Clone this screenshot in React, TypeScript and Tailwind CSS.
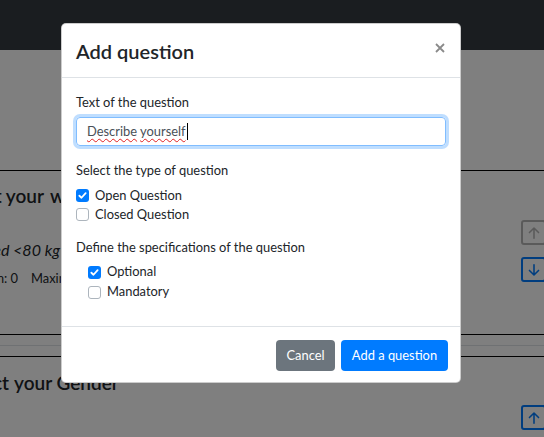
import React from "react";

function Check({ checked }: { checked: boolean }) {
  return checked ? (
    <span className="flex h-[13px] w-[13px] shrink-0 items-center justify-center rounded-[3px] bg-[#007bff]">
      <svg width="9" height="9" viewBox="0 0 8 8">
        <path d="M1.2 4.2 L3.1 6 L6.8 1.9" fill="none" stroke="white" strokeWidth="1.6" strokeLinecap="round" strokeLinejoin="round" />
      </svg>
    </span>
  ) : (
    <span className="h-[13px] w-[13px] shrink-0 rounded-[3px] border border-[#adb5bd] bg-white" />
  );
}

function ArrowBtn({ dir, tone }: { dir: "up" | "down"; tone: "gray" | "blue" }) {
  const c = tone === "gray" ? "#b5b5b5" : "#007bff";
  return (
    <span
      className={
        "flex h-[25px] w-[25px] items-center justify-center rounded-[3px] border-2 " +
        (tone === "gray" ? "border-[#b5b5b5]" : "border-[#007bff]")
      }
    >
      <svg width="14" height="14" viewBox="0 0 16 16">
        {dir === "up" ? (
          <path d="M8 14 V2.5 M2.8 7.5 L8 2.3 L13.2 7.5" fill="none" stroke={c} strokeWidth="1.8" strokeLinecap="round" strokeLinejoin="round" />
        ) : (
          <path d="M8 2 V13.5 M2.8 8.5 L8 13.7 L13.2 8.5" fill="none" stroke={c} strokeWidth="1.8" strokeLinecap="round" strokeLinejoin="round" />
        )}
      </svg>
    </span>
  );
}

export default function App() {
  return (
    <div className="relative h-[437px] w-[544px] overflow-hidden bg-white font-['Lato',sans-serif] text-[#212529]">
      {/* page underneath */}
      <div className="h-[50px] bg-[#343a40]" />
      <div className="h-[121px] border-b border-black" />
      <section className="flex h-[163px] justify-between">
        <div className="pt-[13px]">
          <h5 className="flex whitespace-nowrap text-[19px] font-semibold leading-[24px]">
            <span className="flex w-[44px] justify-end">Select your</span>
            <span className="ml-[6px]">weight</span>
          </h5>
          <p className="mt-[30px] flex whitespace-nowrap text-[16px] italic leading-[24px]">
            <span className="flex w-[60px] justify-end">Underweighted &lt;80 kg</span>
          </p>
          <p className="mt-[6px] flex whitespace-nowrap text-[12.9px] leading-[20px]">
            <span className="flex w-[18px] justify-end">Minimum: 0</span>
            <span className="ml-[13px]">Maximum: 1</span>
          </p>
        </div>
        <div className="-mr-[2px] flex flex-col gap-[12px] pt-[49px]">
          <ArrowBtn dir="up" tone="gray" />
          <ArrowBtn dir="down" tone="blue" />
        </div>
      </section>
      <div className="h-[12px] border-y border-b-[#dee2e6] border-t-black" />
      <div className="h-[11px] border-b border-black" />
      <section className="flex justify-between">
        <div className="pt-[14px]">
          <h5 className="flex whitespace-nowrap text-[19px] font-semibold leading-[24px]">
            <span className="flex w-[9px] justify-end">Select</span>
            <span className="ml-[5px]">your Gender</span>
          </h5>
        </div>
        <div className="-mr-[2px] pt-[48px]">
          <ArrowBtn dir="up" tone="blue" />
        </div>
      </section>

      {/* backdrop + modal */}
      <div className="absolute inset-0 bg-black/50 pl-[61px] pt-[23px]">
        <div className="w-[400px] rounded-[5px] border border-black/20 bg-white">
          <div className="flex h-[54px] items-center justify-between border-b border-[#dee2e6] pl-[14px] pr-[14px]">
            <h5 className="text-[20px] font-semibold leading-[24px]">Add question</h5>
            <svg width="12" height="12" viewBox="0 0 12 12" className="-mt-[6px]">
              <path d="M2 2 L10 10 M10 2 L2 10" stroke="#8a8a8a" strokeWidth="1.8" />
            </svg>
          </div>
          <div className="px-[14px] pb-[24px] pt-[14px] text-[12.9px]">
            <label className="block leading-[20px]">Text of the question</label>
            <div className="mt-[5px] flex h-[29px] items-center rounded-[4px] border border-[#80bdff] px-[10px] shadow-[0_0_0_3px_rgba(0,123,255,0.25)]">
              <span className="text-[#495057]">
                <span className="underline decoration-[#e02020] decoration-wavy decoration-1 underline-offset-2">Describe</span>{" "}
                <span className="underline decoration-[#e02020] decoration-wavy decoration-1 underline-offset-2">yourself</span>
              </span>
              <span className="ml-[1px] h-[17px] w-[1px] bg-black" />
            </div>
            <p className="mt-[14px] leading-[20px]">Select the type of question</p>
            <div className="mt-[6px] flex flex-col">
              <div className="flex h-[19px] items-center gap-[6px]">
                <Check checked />
                <span>Open Question</span>
              </div>
              <div className="flex h-[19px] items-center gap-[6px]">
                <Check checked={false} />
                <span>Closed Question</span>
              </div>
            </div>
            <p className="mt-[13px] leading-[20px]">Define the specifications of the question</p>
            <div className="mt-[5px] flex flex-col pl-[12px]">
              <div className="flex h-[20px] items-center gap-[6px]">
                <Check checked />
                <span>Optional</span>
              </div>
              <div className="flex h-[20px] items-center gap-[6px]">
                <Check checked={false} />
                <span>Mandatory</span>
              </div>
            </div>
          </div>
          <div className="flex justify-end gap-[6px] border-t border-[#dee2e6] pb-[11px] pr-[12px] pt-[13px]">
            <button className="h-[31px] w-[59px] rounded-[4px] bg-[#6c757d] text-[12.9px] text-white">Cancel</button>
            <button className="h-[31px] w-[107px] rounded-[4px] bg-[#007bff] text-[12.9px] text-white">Add a question</button>
          </div>
        </div>
      </div>
    </div>
  );
}
